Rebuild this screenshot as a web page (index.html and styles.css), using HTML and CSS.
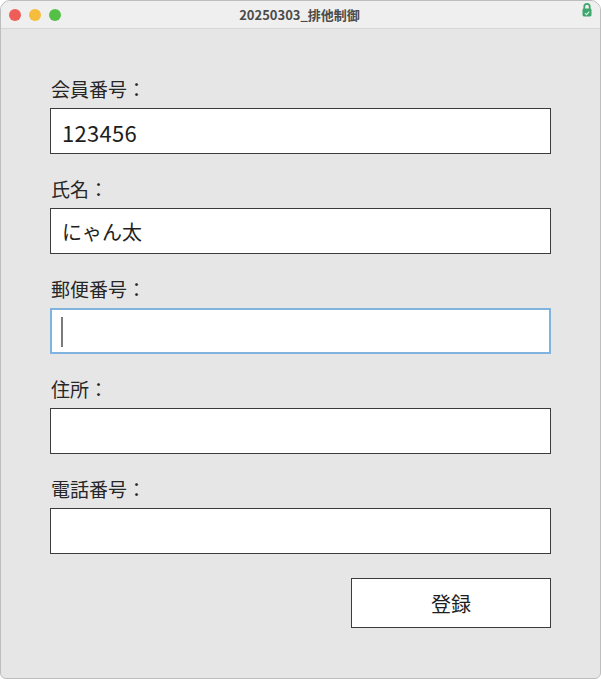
FILE: index.html
```html
<!DOCTYPE html>
<html lang="ja">
<head>
<meta charset="utf-8">
<title>20250303_排他制御</title>
<link rel="stylesheet" href="styles.css">
</head>
<body>
<div class="window">
  <div class="titlebar">
    <div class="lights">
      <span class="light red"></span>
      <span class="light yellow"></span>
      <span class="light green"></span>
    </div>
    <div class="title">20250303_排他制御</div>
    <svg class="lock" width="10" height="15" viewBox="0 0 10 15">
      <path d="M2.3 7V4.6a2.7 2.7 0 0 1 5.4 0V7" fill="none" stroke="#3ea56c" stroke-width="1.8"/>
      <rect x="0.5" y="6.5" width="9" height="8" rx="1.4" fill="#3ea56c"/>
      <path d="M3 11.2l1.6 1.4 2.6-3" fill="none" stroke="#d8f0e2" stroke-width="1.2"/>
    </svg>
  </div>
  <div class="content">
    <div class="field">
      <div class="label">会員番号：</div>
      <div class="box"><span class="value num">123456</span></div>
    </div>
    <div class="field">
      <div class="label">氏名：</div>
      <div class="box"><span class="value">にゃん太</span></div>
    </div>
    <div class="field">
      <div class="label">郵便番号：</div>
      <div class="box focused"><span class="caret"></span></div>
    </div>
    <div class="field">
      <div class="label">住所：</div>
      <div class="box"></div>
    </div>
    <div class="field">
      <div class="label">電話番号：</div>
      <div class="box"></div>
    </div>
    <div class="actions">
      <div class="button">登録</div>
    </div>
  </div>
</div>
</body>
</html>
```
FILE: styles.css
```css
* { box-sizing: border-box; }
html, body { margin: 0; padding: 0; background: #ffffff; }
body {
  font-family: "Noto Sans CJK JP", "Noto Sans", sans-serif;
  color: #222;
}
.window {
  width: 601px;
  height: 679px;
  border: 1px solid #bdbdbd;
  border-radius: 10px 10px 6px 6px;
  background: #e6e6e6;
  overflow: hidden;
  display: flex;
  flex-direction: column;
}
.titlebar {
  height: 28px;
  flex: none;
  background: #f0efef;
  border-bottom: 1px solid #d6d6d6;
  display: flex;
  align-items: center;
  padding: 0 8px 0 8px;
}
.lights { display: flex; gap: 8px; }
.light {
  width: 12px;
  height: 12px;
  border-radius: 50%;
  display: block;
}
.light.red { background: #ee5d57; }
.light.yellow { background: #f5bd3b; }
.light.green { background: #55c046; }
.title {
  flex: 1;
  text-align: center;
  font-size: 13px;
  font-weight: 700;
  color: #4b4b4b;
  margin-left: -44px;
}
.lock { display: block; margin-top: -10px; }
.content {
  padding: 48px 49px 0 49px;
  display: flex;
  flex-direction: column;
}
.field { margin-bottom: 23px; }
.label {
  height: 24px;
  line-height: 24px;
  font-size: 19px;
  color: #262626;
  padding-left: 1px;
  margin-bottom: 7px;
}
.box {
  height: 46px;
  background: #ffffff;
  border: 1px solid #3c3c3c;
  display: flex;
  align-items: center;
  padding-left: 11px;
}
.box.focused {
  border: 2px solid #80b3e0;
  padding-left: 9px;
}
.value {
  font-size: 20px;
  color: #1e1e1e;
  line-height: 1;
  padding-top: 1px;
}
.value.num {
  font-size: 22px;
  letter-spacing: 0.3px;
}
.caret {
  display: block;
  width: 2px;
  height: 30px;
  background: #7a7a7a;
  margin-top: 2px;
}
.actions {
  display: flex;
  justify-content: flex-end;
  margin-top: 1px;
}
.button {
  width: 200px;
  height: 50px;
  background: #ffffff;
  border: 1px solid #3c3c3c;
  display: flex;
  align-items: center;
  justify-content: center;
  font-size: 20px;
  color: #1e1e1e;
}
```
